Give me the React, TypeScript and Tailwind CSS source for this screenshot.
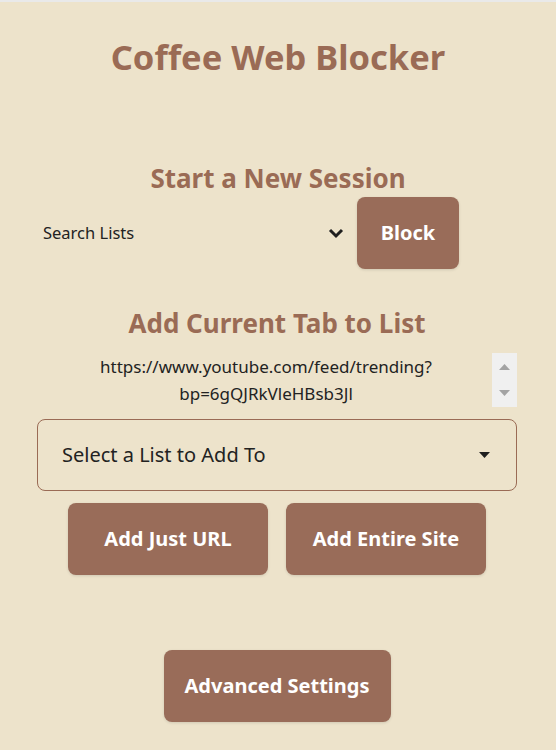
const brown = "bg-[#996c59]";

function ActionButton({ label, className }: { label: string; className: string }) {
  return (
    <button
      className={`${brown} ${className} h-[72px] rounded-lg text-[20px] font-bold text-white shadow-[0_1px_3px_rgba(0,0,0,0.12)]`}
    >
      {label}
    </button>
  );
}

function FakeScrollbar() {
  return (
    <div className="flex h-[54px] w-[25px] flex-col items-center justify-between bg-[#f0f0f0] py-[11px]">
      <svg width="11" height="6" viewBox="0 0 11 6">
        <path d="M5.5 0L11 6H0z" fill="#a3a3a3" />
      </svg>
      <svg width="11" height="6" viewBox="0 0 11 6">
        <path d="M0 0h11L5.5 6z" fill="#a3a3a3" />
      </svg>
    </div>
  );
}

export default function App() {
  return (
    <div
      className="min-h-[750px] border-t-2 border-[#e9e9e9] bg-[#ede3cb] text-[#222]"
      style={{ fontFamily: '"Noto Sans", "Open Sans", sans-serif' }}
    >
      <h1 className="pt-[31px] text-center text-[34.5px] font-bold leading-[48px] text-[#9a6b55]">
        Coffee Web Blocker
      </h1>

      <section className="mt-[81px] flex flex-col items-center">
        <h2 className="text-[26px] font-bold leading-[32px] text-[#9a6b55]">Start a New Session</h2>
        <div className="mt-[3px] flex w-full items-center pl-[43px]">
          <div className="flex w-[303px] items-center justify-between">
            <span className="text-[16.5px]">Search Lists</span>
            <svg width="18" height="12" viewBox="0 0 18 12" className="mr-[1px]">
              <path d="M3 3l6 6 6-6" fill="none" stroke="#1f1f1f" strokeWidth="3" />
            </svg>
          </div>
          <ActionButton label="Block" className="ml-[11px] w-[102px]" />
        </div>
      </section>

      <section className="mt-[38px] flex flex-col items-center pr-[2px]">
        <h2 className="text-[26px] font-bold leading-[32px] text-[#9a6b55]">Add Current Tab to List</h2>
        <div className="mt-[14px] flex w-full justify-end pr-[37px]">
          <textarea
            readOnly
            value="https://www.youtube.com/feed/trending?bp=6gQJRkVleHBsb3Jl"
            className="h-[55px] w-[452px] resize-none overflow-hidden bg-transparent text-center text-[17px] leading-[27px] outline-none"
          />
          <FakeScrollbar />
        </div>
        <div className="mt-[11px] flex h-[72px] w-[480px] items-center justify-between rounded-lg border border-[#9a6b55] pl-[24px] pr-[26px]">
          <span className="text-[20px]">Select a List to Add To</span>
          <svg width="11" height="6" viewBox="0 0 11 6">
            <path d="M0 0h11L5.5 6z" fill="#1f1f1f" />
          </svg>
        </div>
        <div className="mt-[12px] flex gap-[18px]">
          <ActionButton label="Add Just URL" className="w-[200px]" />
          <ActionButton label="Add Entire Site" className="w-[200px]" />
        </div>
      </section>

      <div className="mt-[75px] flex justify-center pr-[2px]">
        <ActionButton label="Advanced Settings" className="w-[227px]" />
      </div>
    </div>
  );
}
